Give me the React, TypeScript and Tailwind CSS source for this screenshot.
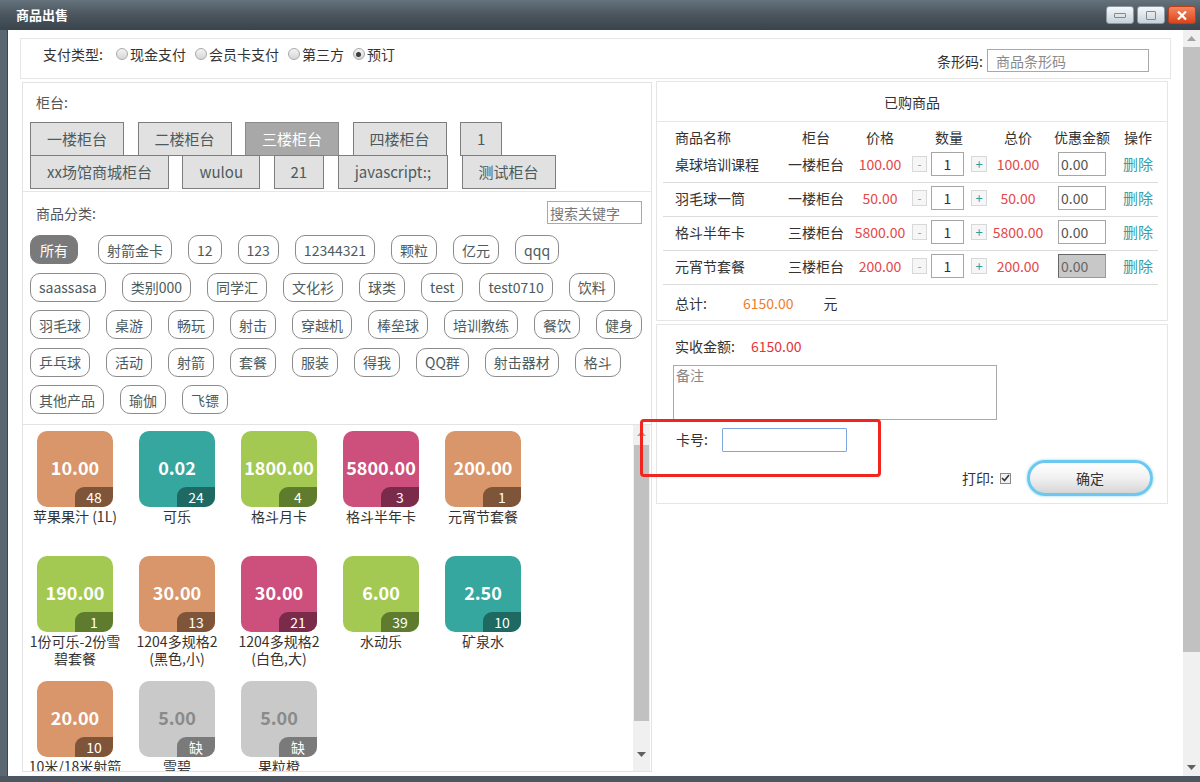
import React from "react";

const counters1 = [
  { t: "一楼柜台", a: false },
  { t: "二楼柜台", a: false },
  { t: "三楼柜台", a: true },
  { t: "四楼柜台", a: false },
  { t: "1", a: false },
];
const counters2 = ["xx场馆商城柜台", "wulou", "21", "javascript:;", "测试柜台"];

const tagRows = [
  ["所有", "射箭金卡", "12", "123", "12344321", "颗粒", "亿元", "qqq"],
  ["saassasa", "类别000", "同学汇", "文化衫", "球类", "test", "test0710", "饮料"],
  ["羽毛球", "桌游", "畅玩", "射击", "穿越机", "棒垒球", "培训教练", "餐饮", "健身"],
  ["乒乓球", "活动", "射箭", "套餐", "服装", "得我", "QQ群", "射击器材", "格斗"],
  ["其他产品", "瑜伽", "飞镖"],
];

type Tone = { bg: string; bd: string; tx: string };
const O: Tone = { bg: "bg-[#d9966a]", bd: "bg-[#7e5538]", tx: "text-white" };
const T: Tone = { bg: "bg-[#36a79f]", bd: "bg-[#1e6a63]", tx: "text-white" };
const G: Tone = { bg: "bg-[#a3c953]", bd: "bg-[#5e7b2e]", tx: "text-white" };
const P: Tone = { bg: "bg-[#cc4f7c]", bd: "bg-[#7b2b4a]", tx: "text-white" };
const X: Tone = { bg: "bg-[#c9c9c9]", bd: "bg-[#7a7a7a]", tx: "text-[#8a8a8a]" };

const products: { p: string; c: string; n: string; tone: Tone }[] = [
  { p: "10.00", c: "48", n: "苹果果汁 (1L)", tone: O },
  { p: "0.02", c: "24", n: "可乐", tone: T },
  { p: "1800.00", c: "4", n: "格斗月卡", tone: G },
  { p: "5800.00", c: "3", n: "格斗半年卡", tone: P },
  { p: "200.00", c: "1", n: "元宵节套餐", tone: O },
  { p: "190.00", c: "1", n: "1份可乐-2份雪\n碧套餐", tone: G },
  { p: "30.00", c: "13", n: "1204多规格2\n(黑色,小)", tone: O },
  { p: "30.00", c: "21", n: "1204多规格2\n(白色,大)", tone: P },
  { p: "6.00", c: "39", n: "水动乐", tone: G },
  { p: "2.50", c: "10", n: "矿泉水", tone: T },
  { p: "20.00", c: "10", n: "10米/18米射箭", tone: O },
  { p: "5.00", c: "缺", n: "雪碧", tone: X },
  { p: "5.00", c: "缺", n: "果粒橙", tone: X },
];

const cart = [
  { n: "桌球培训课程", g: "一楼柜台", p: "100.00", d: false },
  { n: "羽毛球一筒", g: "一楼柜台", p: "50.00", d: false },
  { n: "格斗半年卡", g: "三楼柜台", p: "5800.00", d: false },
  { n: "元宵节套餐", g: "三楼柜台", p: "200.00", d: true },
];

function Radio({ checked }: { checked?: boolean }) {
  return (
    <span className="w-[12px] h-[12px] rounded-full border border-[#a9a9a9] bg-linear-to-b from-[#f4f4f4] to-[#d6d6d6] flex items-center justify-center">
      {checked && <span className="w-[5px] h-[5px] rounded-full bg-[#3c3c3c]" />}
    </span>
  );
}

function UpArrow() {
  return (
    <svg width="9" height="5" viewBox="0 0 9 5">
      <path d="M0 5 L4.5 0 L9 5 Z" fill="#a3a3a3" />
    </svg>
  );
}
function DownArrow() {
  return (
    <svg width="9" height="5" viewBox="0 0 9 5">
      <path d="M0 0 L4.5 5 L9 0 Z" fill="#606060" />
    </svg>
  );
}

export default function App() {
  return (
    <div className="w-[1200px] h-[782px] relative overflow-hidden bg-[#4b5660] font-['Noto_Sans_CJK_SC',sans-serif] text-[14px] leading-[20px] text-[#333]">
      {/* Title bar */}
      <div className="h-[30px] flex items-center justify-between bg-linear-to-b from-[#66727b] via-[#4a555e] to-[#3a444c]">
        <div className="pl-[16px] text-white font-bold text-[13px] leading-[16px]">商品出售</div>
        <div className="flex items-center gap-[3px] pr-[4px]">
          <div className="w-[28px] h-[18px] rounded-[3px] border border-[#8d99a2] bg-linear-to-b from-[#f5f8fa] to-[#c8d2d9] flex items-center justify-center">
            <span className="w-[12px] h-[5px] border border-[#7b8a95] rounded-[1px]" />
          </div>
          <div className="w-[28px] h-[18px] rounded-[3px] border border-[#8d99a2] bg-linear-to-b from-[#f5f8fa] to-[#c8d2d9] flex items-center justify-center">
            <span className="w-[10px] h-[9px] border border-[#7b8a95] rounded-[1px]" />
          </div>
          <div className="w-[28px] h-[18px] rounded-[3px] border border-[#b8401c] bg-linear-to-b from-[#f7845a] to-[#d8431c] flex items-center justify-center">
            <svg width="10" height="9" viewBox="0 0 10 9">
              <path d="M1 0.5 L9 8.5 M9 0.5 L1 8.5" stroke="white" strokeWidth="2.2" />
            </svg>
          </div>
        </div>
      </div>

      {/* Body */}
      <div className="flex h-[746px]">
        <div className="w-[8px] bg-[#5a6670] border-r border-[#3d464e]" />
        <div className="flex-1 flex bg-white">
          {/* content */}
          <div className="flex-1 pl-[12px] pt-[8px]">
            {/* Top box */}
            <div className="w-[1151px] h-[41px] border border-[#e6e6e6] flex justify-between">
              <div className="flex items-center pl-[22px] pt-[2px] h-[28px]">
                <span>支付类型:</span>
                <span className="ml-[13px]"><Radio /></span>
                <span className="ml-[2px]">现金支付</span>
                <span className="ml-[9px]"><Radio /></span>
                <span className="ml-[2px]">会员卡支付</span>
                <span className="ml-[9px]"><Radio /></span>
                <span className="ml-[2px]">第三方</span>
                <span className="ml-[9px]"><Radio checked /></span>
                <span className="ml-[2px]">预订</span>
              </div>
              <div className="flex items-center pr-[21px] pt-[10px] h-[33px]">
                <span className="mr-[4px]">条形码:</span>
                <div className="w-[162px] h-[23px] border border-[#a9a9a9] pl-[8px] flex items-center text-[#8a8a8a]">商品条形码</div>
              </div>
            </div>

            <div className="flex ml-[2px] mt-[3px] gap-[4px]">
              {/* Left panel */}
              <div className="w-[630px] h-[690px] border border-[#e3e3e3] flex flex-col">
                {/* counters */}
                <div className="h-[109px] border-b border-[#e6e6e6] pt-[9px] shrink-0">
                  <div className="pl-[13px] text-[#555]">柜台:</div>
                  <div className="pl-[7px] mt-[10px]">
                    <div className="flex gap-x-[13.5px]">
                      {counters1.map((c) => (
                        <div
                          key={c.t}
                          className={
                            c.a
                              ? "h-[34px] px-[16px] border border-[#8a8a8a] bg-[#a8a8a8] text-white text-[15px] flex items-center"
                              : "h-[34px] px-[16px] border border-[#7d7d7d] bg-[#e1e1e1] text-[#4c5b5e] text-[15px] flex items-center"
                          }
                        >
                          {c.t}
                        </div>
                      ))}
                    </div>
                    <div className="flex gap-x-[13.5px] -mt-[1px]">
                      {counters2.map((c) => (
                        <div
                          key={c}
                          className="h-[34px] px-[16px] border border-[#7d7d7d] bg-[#e1e1e1] text-[#4c5b5e] text-[15px] flex items-center"
                        >
                          {c}
                        </div>
                      ))}
                    </div>
                  </div>
                </div>

                {/* categories */}
                <div className="h-[233px] border-b border-[#e3e3e3] shrink-0">
                  <div className="mt-[9px] h-[23px] flex items-center justify-between pl-[13px] pr-[9px]">
                    <span className="text-[#555]">商品分类:</span>
                    <div className="w-[95px] h-[23px] border border-[#a9a9a9] pl-[2px] flex items-center text-[#777]">搜索关键字</div>
                  </div>
                  <div className="mt-[11px] pl-[7px] flex flex-col gap-y-[8.5px]">
                    {tagRows.map((row, ri) => (
                      <div key={ri} className="flex gap-x-[16px]">
                        {row.map((t) =>
                          t === "所有" ? (
                            <div key={t} className="h-[29px] px-[9px] mr-[4px] rounded-[10px] border border-[#7a7a7a] bg-[#7a7a7a] text-white flex items-center">
                              {t}
                            </div>
                          ) : (
                            <div key={t} className="h-[29px] px-[8px] rounded-[10px] border border-[#8c8c8c] text-[#4c5b5e] flex items-center whitespace-nowrap">
                              {t}
                            </div>
                          )
                        )}
                      </div>
                    ))}
                  </div>
                </div>

                {/* products */}
                <div className="flex-1 flex overflow-hidden">
                  <div className="flex-1 pl-[1px] pt-[6px] overflow-hidden">
                    <div className="flex flex-wrap">
                      {products.map((p, i) => (
                        <div key={i} className="w-[102px] h-[125px] flex flex-col items-center">
                          <div className={`relative w-[76px] h-[76px] rounded-[10px] overflow-hidden ${p.tone.bg} flex items-center justify-center`}>
                            <span className={`${p.tone.tx} font-bold text-[18px] leading-[22px] -mt-[4px]`}>{p.p}</span>
                            <div className={`absolute right-0 bottom-0 w-[38px] h-[20px] rounded-tl-[9px] ${p.tone.bd} text-white text-[14px] leading-[20px] text-center`}>
                              {p.c}
                            </div>
                          </div>
                          <div className="mt-[1px] text-[14px] leading-[17px] text-[#333] text-center whitespace-pre">{p.n}</div>
                        </div>
                      ))}
                    </div>
                  </div>
                  {/* inner scrollbar */}
                  <div className="w-[17px] mr-[1px] bg-[#f0f0f0] flex flex-col">
                    <div className="h-[17px] flex items-center justify-center"><UpArrow /></div>
                    <div className="h-[276px] mt-[3px] mx-[1px] bg-[#c1c1c1]" />
                    <div className="flex-1" />
                    <div className="h-[17px] flex items-center justify-center mb-[8px]"><DownArrow /></div>
                  </div>
                </div>
              </div>

              {/* Right panel */}
              <div className="w-[512px] flex flex-col">
                <div className="h-[40px] border border-b-0 border-[#e6e6e6] flex items-center justify-center -mt-[1px]">已购商品</div>
                <div className="border border-[#e6e6e6] pt-[2px]">
                  {/* header row */}
                  <div className="ml-[6px] mr-[9px] h-[25px] flex items-center pl-[12px]">
                    <div className="w-[105px]">商品名称</div>
                    <div className="w-[72px] text-center">柜台</div>
                    <div className="w-[56px] text-center">价格</div>
                    <div className="w-[82px] text-center">数量</div>
                    <div className="w-[56px] text-center">总价</div>
                    <div className="w-[72px] text-center">优惠金额</div>
                    <div className="w-[40px] text-center">操作</div>
                  </div>
                  {cart.map((r) => (
                    <div key={r.n} className="ml-[6px] mr-[9px] h-[34px] pb-[3px] border-b border-[#dcdcdc] flex items-center pl-[12px]">
                      <div className="w-[105px] whitespace-nowrap">{r.n}</div>
                      <div className="w-[72px] text-center">{r.g}</div>
                      <div className="w-[56px] text-center text-[#e5474a] whitespace-nowrap">{r.p}</div>
                      <div className="w-[82px] flex items-center">
                        <div className="ml-[4px] w-[15px] h-[16px] border border-[#d8d8d8] bg-[#f6f6f6] text-[#999] text-[12px] leading-[14px] text-center">-</div>
                        <div className="ml-[4px] w-[33px] h-[24px] border border-[#a6a6a6] text-center leading-[22px]">1</div>
                        <div className="ml-[7px] w-[16px] h-[16px] border border-[#d8d8d8] bg-[#f6f6f6] text-[#2f9ea0] text-[13px] leading-[14px] text-center">+</div>
                      </div>
                      <div className="w-[56px] text-center text-[#e5474a] whitespace-nowrap">{r.p}</div>
                      <div className="w-[72px] flex justify-center">
                        <div
                          className={
                            r.d
                              ? "w-[48px] h-[24px] border border-[#9a9a9a] border-t-[#666] border-l-[#666] bg-[#c8c8c8] pl-[2px] leading-[22px] text-[#666]"
                              : "w-[48px] h-[24px] border border-[#a6a6a6] pl-[2px] leading-[22px] text-[#555]"
                          }
                        >
                          0.00
                        </div>
                      </div>
                      <div className="w-[40px] text-center text-[#3a9ea6] text-[15px]">删除</div>
                    </div>
                  ))}
                  <div className="ml-[6px] mr-[9px] h-[35px] flex items-center pl-[12px]">
                    <span>总计:</span>
                    <span className="ml-[36px] text-[#f07d2d]">6150.00</span>
                    <span className="ml-[30px]">元</span>
                  </div>
                </div>

                <div className="mt-[3px] border border-[#e6e6e6] px-[18px] pt-[11px] pb-[7px]">
                  <div className="flex items-center h-[20px]">
                    <span>实收金额:</span>
                    <span className="ml-[16px] text-[#e5343a]">6150.00</span>
                  </div>
                  <div className="mt-[9px] -ml-[2px] w-[324px] h-[55px] border border-[#a9a9a9] pl-[2px] text-[#888] leading-[18px]">备注</div>
                  <div className="mt-[7px] h-[24px] flex items-center">
                    <span className="ml-[1px]">卡号:</span>
                    <div className="ml-[14px] w-[125px] h-[24px] border border-[#7ea6e0] rounded-[1px] mt-[1px]" />
                  </div>
                  <div className="mt-[9px] h-[36px] flex items-center justify-end -mr-[4px]">
                    <span>打印:</span>
                    <span className="ml-[6px] w-[11px] h-[11px] border border-[#8a8a8a] bg-[#f2f2f2] flex items-center justify-center">
                      <svg width="9" height="8" viewBox="0 0 9 8">
                        <path d="M1 4 L3.5 6.5 L8 1" stroke="#333" strokeWidth="1.6" fill="none" />
                      </svg>
                    </span>
                    <div className="ml-[16px] w-[126px] h-[36px] rounded-full border-[3px] border-[#6cc8ef] bg-linear-to-b from-white via-[#f1f1f1] to-[#d6d6d6] flex items-center justify-center shadow-[0_0_3px_#8fd6f5]">
                      确定
                    </div>
                  </div>
                </div>
              </div>
            </div>
          </div>

          {/* window scrollbar */}
          <div className="w-[17px] bg-[#f0f0f0] flex flex-col">
            <div className="h-[17px] flex items-center justify-center"><UpArrow /></div>
            <div className="h-[605px] bg-[#c1c1c1]" />
            <div className="flex-1" />
            <div className="h-[17px] flex items-center justify-center"><DownArrow /></div>
          </div>
        </div>
      </div>

      {/* red highlight overlay */}
      <div className="absolute left-[640px] top-[419px] w-[241px] h-[58px] border-[3px] border-[#f2241e] rounded-[4px]" />
    </div>
  );
}
